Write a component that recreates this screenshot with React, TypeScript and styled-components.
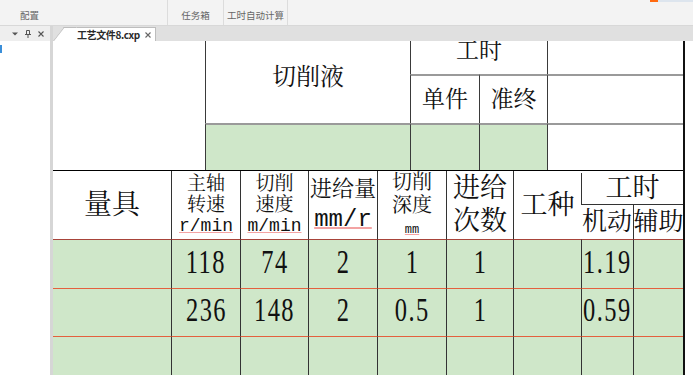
import React from 'react';
import styled, { createGlobalStyle } from 'styled-components';

const CJK = `"Liberation Serif", "Noto Serif CJK SC", "Noto Sans CJK SC", serif`;
const UI = `"Noto Sans CJK SC", "Liberation Sans", sans-serif`;
const GREEN = '#cfe7c9';

const Global = createGlobalStyle`
  html, body { margin: 0; padding: 0; background: #fff; }
  #root { width: 693px; height: 382px; }
`;

const Window = styled.div`
  width: 693px;
  height: 382px;
  display: flex;
  flex-direction: column;
  overflow: hidden;
  background: #fff;
  font-family: ${UI};
`;

const Ribbon = styled.div`
  height: 26px;
  flex: none;
  display: flex;
  box-sizing: border-box;
  background: #f3f3f3;
  border-bottom: 1px solid #d8d8d8;
`;

const RibbonGroup = styled.div<{ $w: number; $pl?: number; $center?: boolean }>`
  width: ${p => p.$w}px;
  box-sizing: border-box;
  display: flex;
  align-items: flex-end;
  justify-content: ${p => (p.$center ? 'center' : 'flex-start')};
  padding-left: ${p => p.$pl ?? 0}px;
  padding-bottom: 4px;
  border-right: 1px solid #dcdcdc;
  font-size: 9.5px;
  line-height: 12px;
  color: #666;
  white-space: nowrap;
`;

const RibbonSpacer = styled.div`
  flex: 1;
`;

const Accent = styled.div<{ $c: string; $w: number }>`
  align-self: flex-start;
  width: ${p => p.$w}px;
  height: 2px;
  background: ${p => p.$c};
`;

const Workspace = styled.div`
  flex: 1;
  display: flex;
  min-height: 0;
`;

const Footer = styled.div`
  height: 7px;
  flex: none;
  background: #fff;
`;

const SidePanel = styled.div`
  width: 50px;
  flex: none;
  display: flex;
  flex-direction: column;
`;

const PanelHeader = styled.div`
  height: 15px;
  flex: none;
  display: flex;
  align-items: center;
  justify-content: flex-end;
  gap: 7px;
  padding-right: 6px;
  background: #eeeeee;
  color: #555;
`;

const PanelBody = styled.div`
  flex: 1;
  background: #fff;
  padding-top: 4px;
`;

const BlueMark = styled.div`
  width: 2px;
  height: 8px;
  background: #3b8fd9;
`;

const Splitter = styled.div`
  width: 3px;
  flex: none;
  background: #d6d6d6;
`;

const DocArea = styled.div`
  flex: 1;
  display: flex;
  flex-direction: column;
  min-width: 0;
`;

const TabStrip = styled.div`
  height: 15px;
  flex: none;
  display: flex;
  align-items: flex-end;
  background: #e0e0e0;
`;

const Tab = styled.div`
  position: relative;
  margin-left: 10px;
  width: 93px;
  height: 14px;
  box-sizing: border-box;
  background: #fff;
  border-top: 1px solid #bdbdbd;
  border-right: 1px solid #bdbdbd;
  display: flex;
  align-items: center;
  padding-left: 14px;
  padding-right: 4px;
  font-size: 10px;
  letter-spacing: -0.4px;
  font-weight: bold;
  color: #2a2a2a;
  white-space: nowrap;
  &::before {
    content: '';
    position: absolute;
    left: -10px;
    top: -1px;
    bottom: 0;
    width: 12px;
    background: #fff;
    border-left: 1px solid #bdbdbd;
    border-top: 1px solid #bdbdbd;
    transform-origin: bottom left;
    transform: skewX(-38deg);
  }
`;

const TabLabel = styled.span`
  position: relative;
  z-index: 1;
`;

const TabClose = styled.span`
  margin-left: auto;
  display: flex;
  color: #555;
`;

const Viewport = styled.div`
  flex: 1;
  overflow: hidden;
  background: #fff;
`;

const Sheet = styled.div`
  width: 632px;
  margin-top: -10px;
  box-sizing: border-box;
  border-right: 2px solid #111;
  color: #111;
`;

const TopGrid = styled.div`
  display: grid;
  grid-template-columns: 152px 205px 69px 68px 136px;
  grid-template-rows: 43px 49px 47px;
`;

const TopCell = styled.div<{
  $col: string;
  $row: string;
  $left?: boolean;
  $top?: boolean;
  $fill?: boolean;
  $size?: number;
  $pb?: number;
}>`
  grid-column: ${p => p.$col};
  grid-row: ${p => p.$row};
  box-sizing: border-box;
  border-left: ${p => (p.$left ? '1px solid #3a3a3a' : 'none')};
  border-top: ${p => (p.$top ? '2px solid #9a9a9a' : 'none')};
  background: ${p => (p.$fill ? GREEN : 'transparent')};
  display: flex;
  align-items: center;
  justify-content: center;
  padding-bottom: ${p => p.$pb ?? 0}px;
  font-family: ${CJK};
  font-size: ${p => p.$size ?? 23}px;
  line-height: 1.2;
  white-space: nowrap;
`;

const LowerGrid = styled.div`
  display: grid;
  grid-template-columns: 118px 69px 68px 69px 69px 67px 68px 52px 50px;
  grid-template-rows: 68px 49px 48px 48px;
  border-top: 1px solid #000;
`;

const HeadCell = styled.div<{ $first?: boolean; $start?: boolean }>`
  box-sizing: border-box;
  border-left: ${p => (p.$first ? 'none' : '1px solid #333')};
  display: flex;
  flex-direction: column;
  align-items: center;
  justify-content: ${p => (p.$start ? 'flex-start' : 'center')};
  min-width: 0;
`;

const HeadText = styled.span<{ $size: number; $lh: number; $mt?: number }>`
  display: block;
  text-align: center;
  font-family: ${CJK};
  font-size: ${p => p.$size}px;
  line-height: ${p => p.$lh}px;
  margin-top: ${p => p.$mt ?? 0}px;
  white-space: nowrap;
`;

const UnitText = styled.span<{ $size: number; $lh: number; $mt?: number }>`
  display: block;
  font-family: "Liberation Mono", monospace;
  font-size: ${p => p.$size}px;
  line-height: ${p => p.$lh}px;
  margin-top: ${p => p.$mt ?? 0}px;
  white-space: nowrap;
  text-decoration: underline;
  text-decoration-color: #f3a3a3;
  text-underline-offset: 1px;
`;

const HoursCell = styled.div`
  grid-column: span 2;
  display: flex;
  flex-direction: column;
`;

const HoursTop = styled.div`
  margin-top: 2px;
  height: 32px;
  flex: none;
  box-sizing: border-box;
  border-left: 1px solid #333;
  border-bottom: 1px solid #333;
  display: flex;
  align-items: center;
  justify-content: center;
  font-family: ${CJK};
  font-size: 27px;
  line-height: 1.1;
`;

const HoursSplit = styled.div`
  flex: 1;
  display: grid;
  grid-template-columns: 52px 50px;
`;

const HoursSub = styled.div<{ $left?: boolean }>`
  box-sizing: border-box;
  border-left: ${p => (p.$left ? '1px solid #333' : 'none')};
  display: flex;
  align-items: center;
  justify-content: center;
  font-family: ${CJK};
  font-size: 25px;
  line-height: 1.1;
  white-space: nowrap;
  min-width: 0;
`;

const DataCell = styled.div<{ $first?: boolean; $line: string; $left?: boolean }>`
  box-sizing: border-box;
  border-left: ${p => (p.$first ? 'none' : '1px solid #333')};
  border-top: 1px solid ${p => p.$line};
  background: ${GREEN};
  display: flex;
  align-items: center;
  justify-content: ${p => (p.$left ? 'flex-start' : 'center')};
  padding-left: ${p => (p.$left ? 1 : 0)}px;
  padding-bottom: 5px;
  min-width: 0;
  overflow: hidden;
`;

const Num = styled.span<{ $left?: boolean }>`
  display: inline-block;
  font-family: "Liberation Serif", serif;
  font-size: 34px;
  line-height: 1;
  letter-spacing: 2px;
  transform: scaleX(0.72);
  transform-origin: ${p => (p.$left ? 'left center' : 'center')};
  white-space: nowrap;
`;

const DownIcon = () => (
  <svg width="6" height="4" viewBox="0 0 6 4">
    <path d="M0 0.5 L6 0.5 L3 3.5 Z" fill="#555" />
  </svg>
);

const PinIcon = () => (
  <svg width="6" height="8" viewBox="0 0 6 8">
    <path d="M1.5 0.5 H4.5 V4.5 H1.5 Z M0 4.5 H6 M3 4.5 V8" stroke="#555" strokeWidth="1" fill="none" />
  </svg>
);

const CloseIcon = ({ c = '#555' }: { c?: string }) => (
  <svg width="6" height="6" viewBox="0 0 6 6">
    <path d="M0.5 0.5 L5.5 5.5 M5.5 0.5 L0.5 5.5" stroke={c} strokeWidth="1.1" />
  </svg>
);

const HEAD_LINE = '#a8443a';
const ROW_LINE = '#e4603e';

type Row = { vals: string[] };
const rows: Row[] = [
  { vals: ['', '118', '74', '2', '1', '1', '', '1.19', ''] },
  { vals: ['', '236', '148', '2', '0.5', '1', '', '0.59', ''] },
  { vals: ['', '', '', '', '', '', '', '', ''] },
];

export default function App() {
  return (
    <>
      <Global />
      <Window>
        <Ribbon>
          <RibbonGroup $w={168} $pl={20}>配置</RibbonGroup>
          <RibbonGroup $w={56} $center>任务箱</RibbonGroup>
          <RibbonGroup $w={64} $center>工时自动计算</RibbonGroup>
          <RibbonSpacer />
          <Accent $c="#ff6a10" $w={8} />
          <Accent $c="#dde5ee" $w={35} />
        </Ribbon>
        <Workspace>
          <SidePanel>
            <PanelHeader>
              <DownIcon />
              <PinIcon />
              <CloseIcon />
            </PanelHeader>
            <PanelBody>
              <BlueMark />
            </PanelBody>
          </SidePanel>
          <Splitter />
          <DocArea>
            <TabStrip>
              <Tab>
                <TabLabel>工艺文件8.cxp</TabLabel>
                <TabClose>
                  <CloseIcon c="#666" />
                </TabClose>
              </Tab>
            </TabStrip>
            <Viewport>
              <Sheet>
                <TopGrid>
                  <TopCell $col="1" $row="1 / 4" />
                  <TopCell $col="2" $row="1 / 3" $left $size={24}>切削液</TopCell>
                  <TopCell $col="3 / 5" $row="1" $left $pb={4}>工时</TopCell>
                  <TopCell $col="5" $row="1" $left />
                  <TopCell $col="3" $row="2" $left $top>单件</TopCell>
                  <TopCell $col="4" $row="2" $left $top>准终</TopCell>
                  <TopCell $col="5" $row="2" $left $top />
                  <TopCell $col="2" $row="3" $left $top $fill />
                  <TopCell $col="3" $row="3" $left $top $fill />
                  <TopCell $col="4" $row="3" $left $top $fill />
                  <TopCell $col="5" $row="3" $left $top />
                </TopGrid>
                <LowerGrid>
                  <HeadCell $first>
                    <HeadText $size={28} $lh={32}>量具</HeadText>
                  </HeadCell>
                  <HeadCell>
                    <HeadText $size={19} $lh={21}>主轴<br />转速</HeadText>
                    <UnitText $size={18} $lh={22}>r/min</UnitText>
                  </HeadCell>
                  <HeadCell>
                    <HeadText $size={19} $lh={21}>切削<br />速度</HeadText>
                    <UnitText $size={18} $lh={22}>m/min</UnitText>
                  </HeadCell>
                  <HeadCell>
                    <HeadText $size={22} $lh={30}>进给量</HeadText>
                    <UnitText $size={24} $lh={32}>mm/r</UnitText>
                  </HeadCell>
                  <HeadCell $start>
                    <HeadText $size={20} $lh={23}>切削<br />深度</HeadText>
                    <UnitText $size={12} $lh={14} $mt={6}>mm</UnitText>
                  </HeadCell>
                  <HeadCell>
                    <HeadText $size={27} $lh={33}>进给<br />次数</HeadText>
                  </HeadCell>
                  <HeadCell>
                    <HeadText $size={27} $lh={32}>工种</HeadText>
                  </HeadCell>
                  <HoursCell>
                    <HoursTop>工时</HoursTop>
                    <HoursSplit>
                      <HoursSub>机动</HoursSub>
                      <HoursSub $left>辅助</HoursSub>
                    </HoursSplit>
                  </HoursCell>
                  {rows.map((r, ri) =>
                    r.vals.map((v, ci) => (
                      <DataCell
                        key={`${ri}-${ci}`}
                        $first={ci === 0}
                        $left={ci === 7}
                        $line={ri === 0 ? HEAD_LINE : ROW_LINE}
                      >
                        {v && <Num $left={ci === 7}>{v}</Num>}
                      </DataCell>
                    ))
                  )}
                </LowerGrid>
              </Sheet>
            </Viewport>
          </DocArea>
        </Workspace>
        <Footer />
      </Window>
    </>
  );
}
